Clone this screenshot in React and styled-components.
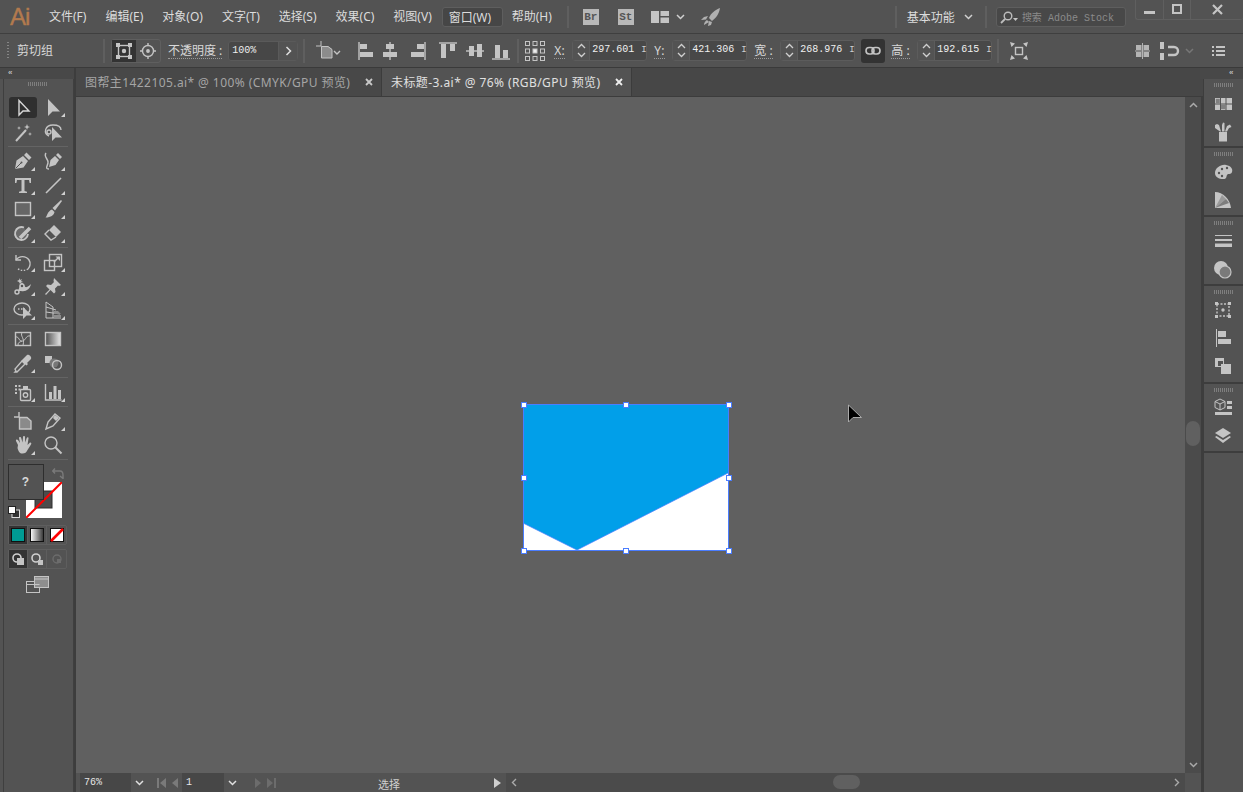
import styled, { createGlobalStyle } from 'styled-components';

const Global = createGlobalStyle`
  html, body { margin: 0; padding: 0; background: #535353; }
  * { box-sizing: border-box; }
`;

const FONT = `"Noto Sans", "Noto Sans CJK SC", "Liberation Sans", sans-serif`;
const MONO = `"Liberation Mono", "Noto Sans CJK SC", monospace`;
const INK = '#c4c4c4';

const Page = styled.div`
  width: 1243px;
  height: 792px;
  overflow: hidden;
  display: flex;
  flex-direction: column;
  background: #535353;
  color: #d6d6d6;
  font: 12px ${FONT};
`;

/* title bar */
const TitleBar = styled.div`
  height: 33px;
  flex: none;
  display: flex;
  align-items: center;
  position: relative;
`;
const Logo = styled.div`
  width: 49px;
  padding-left: 10px;
  font: 400 24px "Liberation Sans", sans-serif;
  -webkit-text-stroke: 0.4px #b27a4e;
  letter-spacing: -1px;
  color: #b27a4e;
`;
const MenuItem = styled.div`
  height: 20px;
  line-height: 19px;
  padding: 0 ${(p) => (p.$active ? 6 : 0)}px;
  margin-right: ${(p) => (p.$active ? 9 : 19)}px;
  margin-left: ${(p) => (p.$active ? -9 : 0)}px;
  ${(p) => p.$active && 'width: 61px;'}
  white-space: nowrap;
  color: #dcdcdc;
  ${(p) => p.$active && 'background: #464646; border: 1px solid #5e5e5e; border-radius: 3px;'}
`;
const VSep = styled.div`
  width: 2px;
  height: ${(p) => p.$h || 22}px;
  flex: none;
  background: #5f5f5f;
  margin-left: ${(p) => p.$ml || 0}px;
`;
const Badge = styled.div`
  width: 16px;
  height: 16px;
  margin-left: ${(p) => p.$ml}px;
  background: #b8b8b8;
  color: #555;
  font: 700 11px/16px "Liberation Mono", monospace;
  text-align: center;
`;
const Spot = styled.div`
  display: flex;
  align-items: center;
  flex: none;
  margin-left: ${(p) => p.$ml || 0}px;
`;
const Workspace = styled.div`
  margin-left: ${(p) => p.$ml}px;
  font-size: 12px;
  color: #dcdcdc;
  white-space: nowrap;
`;
const SearchBox = styled.div`
  width: 130px;
  height: 20px;
  margin-left: 9px;
  display: flex;
  align-items: center;
  gap: 4px;
  padding-left: 3px;
  background: #484848;
  border: 1px solid #5e5e5e;
  border-radius: 3px;
  color: #8b8b8b;
  font: 10px ${MONO};
  white-space: nowrap;
`;
const WindowControls = styled.div`
  position: absolute;
  right: 0;
  top: -1px;
  width: 108px;
  height: 21px;
  display: grid;
  grid-template-columns: 28px 27px 1fr;
  border: 1px solid #5f5f5f;
  border-right: 0;
  border-radius: 0 0 3px 3px;
`;
const WinButton = styled.div`
  display: flex;
  align-items: center;
  justify-content: center;
  border-right: 1px solid #5f5f5f;
  &:last-child { border-right: 0; }
`;

/* control bar */
const ControlBar = styled.div`
  height: 35px;
  flex: none;
  display: flex;
  align-items: center;
  border-top: 1px solid #3f3f3f;
  border-bottom: 1px solid #3a3a3a;
  padding-left: 7px;
`;
const Grip = styled.div`
  width: 2px;
  height: 18px;
  flex: none;
  background: repeating-linear-gradient(#858585 0 1px, transparent 1px 3px);
`;
const Label = styled.div`
  margin-left: ${(p) => p.$ml || 0}px;
  width: ${(p) => (p.$w ? `${p.$w}px` : 'auto')};
  flex: none;
  font-size: 12px;
  line-height: 15px;
  color: #d8d8d8;
  white-space: nowrap;
  ${(p) => p.$under && 'border-bottom: 1px dotted #9a9a9a;'}
`;
const ToggleGroup = styled.div`
  margin-left: ${(p) => p.$ml || 0}px;
  display: flex;
  height: 24px;
  flex: none;
  border: 1px solid #5f5f5f;
  border-radius: 3px;
`;
const ToggleCell = styled.div`
  width: 24px;
  display: flex;
  align-items: center;
  justify-content: center;
  background: ${(p) => (p.$active ? '#333' : 'transparent')};
`;
const OpacityField = styled.div`
  margin-left: 6px;
  width: 70px;
  height: 20px;
  flex: none;
  display: flex;
  border: 1px solid #5a5a5a;
  border-radius: 3px;
  background: #474747;
  font: 10px/18px ${MONO};
  color: #eee;
  padding-left: 3px;
`;
const OpacityArrow = styled.div`
  margin-left: auto;
  width: 19px;
  display: flex;
  align-items: center;
  justify-content: center;
  background: #535353;
  border-left: 1px solid #5a5a5a;
`;
const NumberBox = styled.div`
  margin-left: ${(p) => p.$ml || 0}px;
  width: ${(p) => p.$w || 75}px;
  height: 21px;
  flex: none;
  display: flex;
  border: 1px solid #5c5c5c;
  border-radius: 3px;
  background: #484848;
`;
const Spinner = styled.div`
  width: 17px;
  flex: none;
  display: flex;
  background: #535353;
  border-right: 1px solid #5c5c5c;
  align-items: center;
  justify-content: center;
`;
const NumberValue = styled.div`
  flex: 1;
  padding-left: 2px;
  font: 10px/18px ${MONO};
  color: #f0f0f0;
  white-space: nowrap;
`;
const Caret = styled.span`
  color: #cfcfcf;
  font-size: 9px;
  margin-left: 7px;
`;
const LinkButton = styled.div`
  margin-left: 6px;
  width: 24px;
  height: 24px;
  flex: none;
  display: flex;
  align-items: center;
  justify-content: center;
  background: #333;
  border-radius: 3px;
`;

/* workspace */
const Body = styled.div`
  flex: 1;
  min-height: 0;
  display: flex;
`;
const LeftDock = styled.div`
  width: 76px;
  flex: none;
  display: flex;
  flex-direction: column;
  border-right: 2px solid #3d3d3d;
  padding-left: 3px;
`;
const CollapseRow = styled.div`
  height: 11px;
  flex: none;
  background: #484848;
  margin-left: -3px;
  font: 700 8px/10px "Liberation Sans", sans-serif;
  color: #bdbdbd;
  padding-left: ${(p) => (p.$right ? 29 : 8)}px;
  letter-spacing: -1px;
`;
const ToolPanel = styled.div`
  flex: 1;
  border-left: 1px solid #3f3f3f;
  border-right: 1px solid #3f3f3f;
  display: flex;
  flex-direction: column;
  align-items: center;
  padding: 3px 2px 0 0;
`;
const DragGrip = styled.div`
  width: ${(p) => p.$w || 19}px;
  height: 4px;
  flex: none;
  margin-bottom: ${(p) => p.$mb || 0}px;
  background: repeating-linear-gradient(90deg, #7e7e7e 0 1px, transparent 1px 2px);
`;
const ToolRow = styled.div`
  width: 60px;
  height: ${(p) => p.$h || 24}px;
  flex: none;
  display: grid;
  grid-template-columns: 30px 30px;
  align-items: center;
  justify-items: center;
`;
const ToolCell = styled.div`
  position: relative;
  width: 28px;
  height: 21px;
  display: flex;
  align-items: center;
  justify-content: center;
  border-radius: 3px;
  background: ${(p) => (p.$active ? '#2f2f2f' : 'transparent')};
  &::after {
    content: '';
    display: ${(p) => (p.$menu ? 'block' : 'none')};
    position: absolute;
    right: 2px;
    bottom: 1px;
    border-style: solid;
    border-width: 0 0 4px 4px;
    border-color: transparent transparent #d0d0d0 transparent;
  }
`;
const ToolSep = styled.div`
  width: 60px;
  height: 1px;
  flex: none;
  margin: ${(p) => p.$my || 2}px 0;
  background: #646464;
`;
const ColorArea = styled.div`
  position: relative;
  width: 60px;
  height: 57px;
  flex: none;
  margin-top: 2px;
`;
const FillBox = styled.div`
  position: absolute;
  left: 0;
  top: 0;
  width: 36px;
  height: 36px;
  background: #535353;
  border: 1px solid #2e2e2e;
  text-align: center;
  font: 700 12px/34px "Liberation Sans", sans-serif;
  color: #d9d9d9;
  z-index: 1;
`;
const StrokeBox = styled.svg`
  position: absolute;
  left: 18px;
  top: 18px;
`;
const SwapIcon = styled.svg`
  position: absolute;
  left: 44px;
  top: 3px;
`;
const DefaultIcon = styled.svg`
  position: absolute;
  left: 0;
  top: 42px;
`;
const ButtonStrip = styled.div`
  width: 59px;
  height: 20px;
  flex: none;
  margin-top: ${(p) => p.$mt}px;
  display: grid;
  grid-template-columns: repeat(3, 1fr);
  border: 1px solid #5e5e5e;
  border-radius: 2px;
`;
const StripCell = styled.div`
  display: flex;
  align-items: center;
  justify-content: center;
  background: ${(p) => (p.$active ? '#333' : 'transparent')};
  border-right: 1px solid #5e5e5e;
  &:last-child { border-right: 0; }
`;
const ScreenMode = styled.div`
  margin-top: 7px;
  height: 18px;
  flex: none;
`;

const Center = styled.div`
  flex: 1;
  min-width: 0;
  display: flex;
  flex-direction: column;
`;
const TabBar = styled.div`
  height: 29px;
  flex: none;
  display: flex;
  background: #474747;
  border-bottom: 1px solid #3c3c3c;
`;
const Tab = styled.div`
  width: ${(p) => p.$w}px;
  height: 28px;
  flex: none;
  display: flex;
  align-items: center;
  padding: 0 8px 0 9px;
  font-size: 12px;
  letter-spacing: 0.42px;
  white-space: nowrap;
  color: ${(p) => (p.$active ? '#e0e0e0' : '#a5a5a5')};
  background: ${(p) => (p.$active ? '#535353' : '#484848')};
  border-right: 1px solid #3c3c3c;
`;
const TabClose = styled.svg`
  margin-left: auto;
`;
const CanvasRow = styled.div`
  flex: 1;
  min-height: 0;
  display: flex;
`;
const Canvas = styled.div`
  flex: 1;
  position: relative;
  background: #606060;
`;
const Artwork = styled.svg`
  position: absolute;
  left: 443px;
  top: 303px;
`;
const Pointer = styled.svg`
  position: absolute;
  left: 771px;
  top: 307px;
`;
const VScroll = styled.div`
  width: 18px;
  flex: none;
  position: relative;
  background: #4b4b4b;
  display: flex;
  flex-direction: column;
  align-items: center;
  justify-content: space-between;
  padding: 5px 0;
  border-right: 2px solid #3d3d3d;
`;
const VThumb = styled.div`
  position: absolute;
  left: 1px;
  top: 324px;
  width: 14px;
  height: 25px;
  border-radius: 7px;
  background: #606060;
`;
const StatusBar = styled.div`
  height: 19px;
  flex: none;
  display: flex;
  align-items: stretch;
  background: #535353;
  padding-left: 4px;
`;
const StatusField = styled.div`
  width: ${(p) => p.$w}px;
  flex: none;
  padding-left: 4px;
  background: #474747;
  font: 10px/20px ${MONO};
  color: #e6e6e6;
`;
const StatusButton = styled.div`
  width: ${(p) => p.$w || 17}px;
  flex: none;
  margin-left: ${(p) => p.$ml || 0}px;
  display: flex;
  align-items: center;
  justify-content: center;
  gap: 6px;
`;
const StatusText = styled.div`
  width: 198px;
  flex: none;
  margin-left: 8px;
  text-align: center;
  font-size: 11px;
  line-height: 23px;
  color: #cfcfcf;
`;
const HScroll = styled.div`
  flex: 1;
  position: relative;
  background: #4b4b4b;
  display: flex;
  align-items: center;
  justify-content: space-between;
  padding: 0 5px 0 5px;
`;
const HThumb = styled.div`
  position: absolute;
  left: 327px;
  top: 2px;
  width: 27px;
  height: 14px;
  border-radius: 7px;
  background: #606060;
`;
const RightEdge = styled.div`
  width: 18px;
  flex: none;
  background: #535353;
  border-right: 2px solid #3d3d3d;
`;

const RightDock = styled.div`
  width: 40px;
  flex: none;
  display: flex;
  flex-direction: column;
`;
const DockGroup = styled.div`
  height: ${(p) => p.$h}px;
  flex: none;
  display: flex;
  flex-direction: column;
  align-items: center;
  padding: 4px 1px 0 0;
  border-bottom: 2px solid #3d3d3d;
  border-left: 1px solid #3d3d3d;
`;
const DockIcon = styled.div`
  height: ${(p) => p.$h || 28}px;
  flex: none;
  margin-top: ${(p) => p.$mt || 0}px;
  display: flex;
  align-items: center;
  justify-content: center;
`;
const DockRest = styled.div`
  flex: 1;
  border-left: 1px solid #3d3d3d;
`;

/* small helpers for the drawings */
const Ic = ({ w = 20, h = 20, children, fill = 'none', stroke = INK, sw = 1.4 }) => (
  <svg width={w} height={h} viewBox={`0 0 ${w} ${h}`} fill={fill} stroke={stroke} strokeWidth={sw}>
    {children}
  </svg>
);
const Chevron = ({ up, c = '#d0d0d0', w = 9 }) => (
  <svg width={w} height="6" viewBox="0 0 9 6" fill="none" stroke={c} strokeWidth="1.5">
    <path d={up ? 'M1 5l3.500-3.500L8 5' : 'M1 1l3.500 3.500L8 1'} />
  </svg>
);
const Fill = ({ d, fill = INK }) => <path d={d} fill={fill} stroke="none" />;

const AlignIcon = ({ ml, w = 18, children }) => (
  <Spot $ml={ml}>
    <Ic w={w} h={20}>{children}</Ic>
  </Spot>
);

const NumberField = ({ ml, w, value }) => (
  <NumberBox $ml={ml} $w={w}>
    <Spinner>
      <svg width="9" height="17" viewBox="0 0 9 17" fill="none" stroke="#d0d0d0" strokeWidth="1.3">
        <path d="M1 6l3.500-3.500L8 6M1 11l3.500 3.500L8 11" />
      </svg>
    </Spinner>
    <NumberValue>
      {value}
      <Caret>I</Caret>
    </NumberValue>
  </NumberBox>
);

const TOOLS = {
  select: <path d="M6 2.500v14.500l4-4h6z" stroke="#d8d8d8" fill="none" />,
  direct: <Fill d="M5 1v17l4.500-4.500H17z" />,
  wand: (
    <>
      <path d="M3 19L13 8" strokeWidth="2" />
      <Fill d="M14 2l.8 2.200L17 5l-2.200.8L14 8l-.8-2.200L11 5l2.200-.8zM6 4l.5 1.500L8 6l-1.500.5L6 8l-.5-1.500L4 6l1.500-.5zM17 10l.5 1.500 1.500.5-1.500.5-.5 1.500-.5-1.500-1.500-.5 1.500-.5z" />
    </>
  ),
  lasso: (
    <>
      <path d="M6 14C0 11 2 3 10 3c5 0 8 2 8 5" />
      <circle cx="6" cy="10" r="2" />
      <Fill d="M9 5v14l3.500-3.500H19z" />
    </>
  ),
  pen: (
    <>
      <Fill d="M2 18l1.500-8.500L10 5l5 5-4.500 6.500zM11 4l2.500-2.500 5 5L16 9z" />
      <path d="M2.500 17.500L8 12" stroke="#535353" strokeWidth="1" />
      <circle cx="8.500" cy="11.500" r="1" fill="#535353" stroke="none" />
    </>
  ),
  curve: (
    <>
      <path d="M3 2c-3 4 3 6 2 10s-3 6 1 6" />
      <Fill d="M6 16l1.500-7L12 5l4 4-3.500 5zM13 4l2-2 4 4-2 2z" />
    </>
  ),
  type: <Fill d="M2 3h16v5h-1.400L16 5h-4.500v11l2.500.7V18H6v-1.300l2.500-.7V5H4l-.6 3H2z" />,
  line: <path d="M3 18L18 3" strokeWidth="1.600" />,
  rect: <rect x="2.500" y="3.500" width="15" height="13" fill="#666" />,
  brush: (
    <>
      <Fill d="M18 1l1 1-7 9.500-2.500-2.500z" />
      <Fill d="M9 10.500l2.500 2.500c-.5 3-3.500 5.500-9 5.500 2-1.500 1.500-6 6.500-8z" />
    </>
  ),
  shaper: (
    <>
      <path d="M11 4.500A6.500 6.500 0 1 0 15 11" strokeWidth="1.800" fill="#6a6a6a" />
      <path d="M7 15L17 5" strokeWidth="3.500" />
    </>
  ),
  eraser: (
    <>
      <Fill d="M11 2l7 7-5 5-7-7z" />
      <path d="M6 7l-4 4 6 6 5-3" />
    </>
  ),
  rotate: (
    <>
      <path d="M3 3v5h5" />
      <path d="M3 8a8 8 0 0 1 13 0c2 3 1 7-1 9" />
      <path d="M15 17c-3 2-8 2-11-1" strokeDasharray="1.500 1.500" />
    </>
  ),
  scale: (
    <>
      <rect x="1.500" y="8.500" width="10" height="10" />
      <rect x="6.500" y="2.500" width="12" height="12" />
      <path d="M11 10l5-5" />
      <Fill d="M12.500 4.500h4.500V9z" />
    </>
  ),
  warp: (
    <>
      <path d="M3 15c4 1 3-8 6-8 2 0 2 5 5 4 2-1 3-2 4-3-1 5-5 8-10 7-3 0-4 1-5 0z" fill={INK} stroke="none" />
      <circle cx="4" cy="16" r="2" fill="#535353" />
      <circle cx="9" cy="10" r="2" fill="#535353" />
      <Fill d="M6 2l1 2 2-1-1 2 2 1-2 .5L7 8 6 6 4 5l2-1z" />
    </>
  ),
  pin: <Fill d="M11 2l7 7-2 1-1-.5-3 3 .5 3.500-1.500 1.500-3.500-3.500L3 19l-1-1 4.500-4.500L3 10l1.500-1.500L8 9l3-3-.5-1z" />,
  free: (
    <>
      <ellipse cx="9" cy="9" rx="8" ry="6" />
      <path d="M5 9h7" strokeDasharray="1.500 1.500" />
      <Fill d="M10 7v12l3.500-3.500H19z" />
    </>
  ),
  grid: (
    <>
      <path d="M3 2v16h15M3 2l7 5v11M3 7l10 3M3 12l14 2" strokeWidth="1" />
      <Fill d="M11 11h4l3 3h-7zM11 15h7v2h-7z" fill="#8d8d8d" />
    </>
  ),
  mesh: (
    <>
      <rect x="2.500" y="3.500" width="15" height="13" />
      <path d="M2.500 8c4-1 3 5 7 4s3-6 8-5M9 3.500c-2 4 3 5 1 13M5 16c0-3 2-3 4-4" strokeWidth="1" />
    </>
  ),
  gradient: (
    <>
      <defs>
        <linearGradient id="tg">
          <stop offset="0" stopColor="#4c4c4c" />
          <stop offset="1" stopColor="#e6e6e6" />
        </linearGradient>
      </defs>
      <rect x="2.500" y="3.500" width="15" height="13" fill="url(#tg)" />
    </>
  ),
  dropper: (
    <>
      <path d="M3 18l-1 1 2 0 8-8-3-3-7 8z" />
      <Fill d="M10 6l4-4c2-1 5 2 4 4l-4 4 1 1-1.500 1.500L8.500 7.500z" />
    </>
  ),
  blend: (
    <>
      <Fill d="M2 3h7v7H2z" />
      <circle cx="11" cy="10" r="4.500" fill="#777" stroke="none" />
      <circle cx="14" cy="12" r="4.500" />
    </>
  ),
  spray: (
    <>
      <rect x="7.500" y="7.500" width="10" height="11" rx="1" />
      <Fill d="M10 4h5v3h-5z" />
      <circle cx="12.500" cy="13" r="2.200" />
      <Fill d="M2 3h2v2H2zM5.500 3h2v2h-2zM2 6.500h2v2H2zM5.500 6.500h2v2h-2zM2 10h2v2H2z" />
    </>
  ),
  graph: (
    <>
      <Fill d="M6 10h3v7H6zM10.500 4h3v13h-3zM15 8h3v9h-3z" />
      <path d="M2.500 2v16h16" />
    </>
  ),
  artboard: (
    <>
      <Fill d="M6 6h8l4 4v8H6z" fill="#8a8a8a" />
      <path d="M6.500 18V6.500H14l4 3.500v8zM1 6h5M6 1v5" />
    </>
  ),
  knife: (
    <>
      <path d="M3 18l2-7 7-8 5 4-7 8z" />
      <Fill d="M12 4l4 3-3 3-3-3z" />
    </>
  ),
  hand: (
    <Fill d="M5 10L3 6c-.5-1.500 1-2 2-1l2 3-1-5c0-1.500 2-1.500 2.200 0L9.500 7.500 10 2c0-1.500 2-1.500 2 0l.2 5.500 1.500-4.500c.5-1.200 2-.8 1.800.5L14.500 10l2-2c1-1 2.500 0 1.500 1.500L14.500 15c-1 2.500-2.500 3.500-5 3.500-3 0-4-2-5-5.500z" />
  ),
  zoom: (
    <>
      <circle cx="8" cy="8" r="6" />
      <path d="M12 12l6.500 6.500" strokeWidth="2" />
    </>
  ),
};

const Tool = ({ name, active, menu }) => (
  <ToolCell $active={active} $menu={menu}>
    <Ic>{TOOLS[name]}</Ic>
  </ToolCell>
);

const HANDLES = [
  [0, 0], [102, 0], [205, 0],
  [0, 73], [205, 73],
  [0, 146], [102, 146], [205, 146],
];

export default function App() {
  return (
    <Page>
      <Global />
      <TitleBar>
        <Logo>Ai</Logo>
        <MenuItem>文件(F)</MenuItem>
        <MenuItem>编辑(E)</MenuItem>
        <MenuItem>对象(O)</MenuItem>
        <MenuItem>文字(T)</MenuItem>
        <MenuItem>选择(S)</MenuItem>
        <MenuItem>效果(C)</MenuItem>
        <MenuItem>视图(V)</MenuItem>
        <MenuItem $active>窗口(W)</MenuItem>
        <MenuItem>帮助(H)</MenuItem>
        <VSep $ml={-4} />
        <Badge $ml={14}>Br</Badge>
        <Badge $ml={19}>St</Badge>
        <Spot $ml={17}>
          <Ic w={18} h={14}>
            <Fill d="M0 1h8v12H0zM9.500 1H18v5H9.500zM9.500 7.500H18V13H9.500z" />
          </Ic>
        </Spot>
        <Spot $ml={7}>
          <Chevron />
        </Spot>
        <Spot $ml={16}>
          <Ic w={20} h={18}>
            <Fill d="M19 0c-1 6-4 10-8 13l-3-3C10 5 14 2 19 0zM7 8L3 9l-3 3 5-.5zM11 14l-1 3-3 1 1-5zM6 12l2 2-5 3c0-2 1-4 3-5z" fill="#b0b0b0" />
          </Ic>
        </Spot>
        <VSep $ml={174} />
        <Workspace $ml={10}>基本功能</Workspace>
        <Spot $ml={9}>
          <Chevron />
        </Spot>
        <VSep $ml={12} />
        <SearchBox>
          <Ic w={18} h={14} stroke="#bdbdbd">
            <circle cx="8" cy="6" r="3.800" />
            <path d="M5 9l-4 4" strokeWidth="1.800" />
            <Fill d="M13 8h5l-2.500 3z" />
          </Ic>
          搜索 Adobe Stock
        </SearchBox>
        <WindowControls>
          <WinButton>
            <Ic w={11} h={11}>
              <Fill d="M0 7h11v3H0z" />
            </Ic>
          </WinButton>
          <WinButton>
            <Ic w={11} h={11} sw={2}>
              <rect x="1" y="1" width="8" height="8" />
            </Ic>
          </WinButton>
          <WinButton>
            <Ic w={11} h={11} sw={2.2}>
              <path d="M1 1l9 9M10 1l-9 9" />
            </Ic>
          </WinButton>
        </WindowControls>
      </TitleBar>

      <ControlBar>
        <Grip />
        <Label $ml={8} $w={86}>剪切组</Label>
        <VSep $h={24} />
        <ToggleGroup $ml={6}>
          <ToggleCell $active>
            <Ic w={16} h={16}>
              <rect x="2.500" y="2.500" width="11" height="11" />
              <circle cx="8" cy="8" r="1.500" fill={INK} />
              <Fill d="M0 0h4v4H0zM12 0h4v4h-4zM0 12h4v4H0zM12 12h4v4h-4z" />
            </Ic>
          </ToggleCell>
          <ToggleCell>
            <Ic w={16} h={16}>
              <circle cx="8" cy="8" r="5.500" />
              <circle cx="8" cy="8" r="1.200" fill={INK} />
              <path d="M8 0v2.500M8 13.500V16M0 8h2.500M13.500 8H16" />
            </Ic>
          </ToggleCell>
        </ToggleGroup>
        <Label $ml={7} $under>不透明度 :</Label>
        <OpacityField>
          100%
          <OpacityArrow>
            <svg width="7" height="10" viewBox="0 0 7 10" fill="none" stroke="#e0e0e0" strokeWidth="1.500">
              <path d="M1.500 1l4 4-4 4" />
            </svg>
          </OpacityArrow>
        </OpacityField>
        <VSep $ml={5} $h={24} />
        <Spot $ml={11}>
          <Ic w={25} h={20}>
            <Fill d="M5 5h7l4 3v9H5z" fill="#8c8c8c" />
            <path d="M5.500 17V5.500H12l4 3V17zM0 5h5M5 0v5" strokeWidth="1" />
            <path d="M18 10l3 3 3-3" />
          </Ic>
        </Spot>
        <AlignIcon ml={17} w={16}>
          <path d="M1 1v18" />
          <Fill d="M2 3h7v5H2zM2 11h13v5H2z" />
        </AlignIcon>
        <AlignIcon ml={8} w={16}>
          <path d="M8 1v18" />
          <Fill d="M4 3h8v5H4zM1 11h14v5H1z" />
        </AlignIcon>
        <AlignIcon ml={12} w={16}>
          <path d="M15 1v18" />
          <Fill d="M7 3h7v5H7zM1 11h13v5H1z" />
        </AlignIcon>
        <AlignIcon ml={12} w={20}>
          <path d="M1 2h18" />
          <Fill d="M3 3h5v14H3zM12 3h5v7h-5z" />
        </AlignIcon>
        <AlignIcon ml={8} w={18}>
          <path d="M0 10h18" />
          <Fill d="M3 5h5v10H3zM11 3h5v13h-5z" />
        </AlignIcon>
        <AlignIcon ml={8} w={18}>
          <path d="M0 18h18" />
          <Fill d="M3 4h5v13H3zM11 9h5v8h-5z" />
        </AlignIcon>
        <VSep $ml={7} $h={24} />
        <Spot $ml={6}>
          <Ic w={20} h={20} sw={1}>
            <rect x="0.500" y="0.500" width="4" height="4" />
            <rect x="8" y="0.500" width="4" height="4" />
            <rect x="15.500" y="0.500" width="4" height="4" />
            <rect x="0.500" y="8" width="4" height="4" />
            <rect x="8" y="8" width="4" height="4" fill="#eee" />
            <rect x="15.500" y="8" width="4" height="4" />
            <rect x="0.500" y="15.500" width="4" height="4" />
            <rect x="8" y="15.500" width="4" height="4" />
            <rect x="15.500" y="15.500" width="4" height="4" />
          </Ic>
        </Spot>
        <Label $ml={9} $w={11} $under>X:</Label>
        <NumberField ml={7} value="297.601" />
        <Label $ml={7} $w={11} $under>Y:</Label>
        <NumberField ml={7} value="421.306" />
        <Label $ml={7} $w={19} $under>宽 :</Label>
        <NumberField ml={7} value="268.976" />
        <LinkButton>
          <Ic w={16} h={10} sw={1.6}>
            <rect x="1" y="1.500" width="8" height="6.500" rx="3.200" />
            <rect x="7" y="1.500" width="8" height="6.500" rx="3.200" />
          </Ic>
        </LinkButton>
        <Label $ml={6} $w={19} $under>高 :</Label>
        <NumberField ml={7} value="192.615" />
        <VSep $ml={5} $h={24} />
        <Spot $ml={11}>
          <Ic w={18} h={18}>
            <rect x="5.500" y="5.500" width="7" height="7" />
            <Fill d="M0 0l5 1.500L1.500 5zM18 0l-5 1.500L16.500 5zM0 18l5-1.500L1.500 13zM18 18l-5-1.500 3.500-3.500z" />
          </Ic>
        </Spot>
        <Spot $ml={107}>
          <Ic w={15} h={16}>
            <Fill d="M1 2h5.500v5H1zM8.500 2H14v5H8.500zM1 9h5.500v5H1zM8.500 9H14v5H8.500zM7 0h1v16H7zM0 7.500h15v1H0z" fill="#b4b4b4" />
          </Ic>
        </Spot>
        <Spot $ml={10}>
          <Ic w={20} h={18}>
            <Fill d="M0 0h4v7H0zM0 11h4v7H0z" />
            <path d="M8 5h6a4 4 0 0 1 0 8H8" strokeWidth="2.400" />
          </Ic>
        </Spot>
        <Spot $ml={5}>
          <Chevron c="#777" />
        </Spot>
        <Spot $ml={18}>
          <Ic w={13} h={12}>
            <Fill d="M0 1h2v2H0zM4 1h9v2H4zM0 5h2v2H0zM4 5h9v2H4zM0 9h2v2H0zM4 9h9v2H4z" />
          </Ic>
        </Spot>
      </ControlBar>

      <Body>
        <LeftDock>
          <CollapseRow>‹‹</CollapseRow>
          <ToolPanel>
            <DragGrip $mb={9} />
            <ToolRow $h={25}>
              <Tool name="select" active />
              <Tool name="direct" menu />
            </ToolRow>
            <ToolRow>
              <Tool name="wand" />
              <Tool name="lasso" />
            </ToolRow>
            <ToolSep />
            <ToolRow>
              <Tool name="pen" menu />
              <Tool name="curve" menu />
            </ToolRow>
            <ToolRow>
              <Tool name="type" menu />
              <Tool name="line" menu />
            </ToolRow>
            <ToolRow>
              <Tool name="rect" menu />
              <Tool name="brush" menu />
            </ToolRow>
            <ToolRow>
              <Tool name="shaper" menu />
              <Tool name="eraser" menu />
            </ToolRow>
            <ToolSep />
            <ToolRow>
              <Tool name="rotate" menu />
              <Tool name="scale" menu />
            </ToolRow>
            <ToolRow>
              <Tool name="warp" menu />
              <Tool name="pin" menu />
            </ToolRow>
            <ToolRow>
              <Tool name="free" menu />
              <Tool name="grid" menu />
            </ToolRow>
            <ToolSep />
            <ToolRow>
              <Tool name="mesh" />
              <Tool name="gradient" />
            </ToolRow>
            <ToolRow>
              <Tool name="dropper" menu />
              <Tool name="blend" />
            </ToolRow>
            <ToolSep />
            <ToolRow>
              <Tool name="spray" menu />
              <Tool name="graph" menu />
            </ToolRow>
            <ToolSep />
            <ToolRow>
              <Tool name="artboard" />
              <Tool name="knife" menu />
            </ToolRow>
            <ToolRow>
              <Tool name="hand" menu />
              <Tool name="zoom" />
            </ToolRow>
            <ToolSep />
            <ColorArea>
              <FillBox>?</FillBox>
              <StrokeBox width="36" height="36" viewBox="0 0 36 36">
                <rect width="36" height="36" fill="#fff" />
                <rect x="9" y="9" width="17" height="17" fill="#4c4c4c" stroke="#2e2e2e" />
                <path d="M0 36L36 0" stroke="#f00" strokeWidth="2" />
              </StrokeBox>
              <SwapIcon width="12" height="12" viewBox="0 0 12 12" fill="none" stroke="#7a7a7a" strokeWidth="1.400">
                <path d="M1 4h7c2 0 3 1 3 4M3 1.500L.8 4 3 6.500M8 9l3 2.500L11 8" />
              </SwapIcon>
              <DefaultIcon width="12" height="12" viewBox="0 0 12 12">
                <rect x="4" y="4" width="7.500" height="7.500" fill="#333" stroke="#ddd" />
                <rect x="0.500" y="0.500" width="7" height="7" fill="#fff" stroke="#222" />
              </DefaultIcon>
            </ColorArea>
            <ButtonStrip $mt={4}>
              <StripCell $active>
                <svg width="14" height="14" viewBox="0 0 14 14">
                  <rect x="0.500" y="0.500" width="13" height="13" fill="#009b93" stroke="#111" />
                </svg>
              </StripCell>
              <StripCell>
                <svg width="14" height="14" viewBox="0 0 14 14">
                  <defs>
                    <linearGradient id="sg">
                      <stop offset="0" stopColor="#fff" />
                      <stop offset="1" stopColor="#333" />
                    </linearGradient>
                  </defs>
                  <rect x="0.500" y="0.500" width="13" height="13" fill="url(#sg)" stroke="#111" />
                </svg>
              </StripCell>
              <StripCell>
                <svg width="14" height="14" viewBox="0 0 14 14">
                  <rect x="0.500" y="0.500" width="13" height="13" fill="#fff" stroke="#111" />
                  <path d="M1 13L13 1" stroke="#f00" strokeWidth="2.600" />
                </svg>
              </StripCell>
            </ButtonStrip>
            <ButtonStrip $mt={4}>
              <StripCell $active>
                <Ic w={14} h={14} sw={1.6} stroke="#d0d0d0">
                  <circle cx="6" cy="6" r="4" />
                  <Fill d="M6 6h7v7H6z" />
                </Ic>
              </StripCell>
              <StripCell>
                <Ic w={14} h={14} sw={1.6} stroke="#d0d0d0">
                  <circle cx="6" cy="6" r="4" />
                  <Fill d="M8 8h5v5H8z" />
                </Ic>
              </StripCell>
              <StripCell>
                <Ic w={14} h={14} sw={1.4} stroke="#6c6c6c">
                  <circle cx="7" cy="7" r="4" />
                  <Fill d="M7 7h4v4H7z" fill="#6c6c6c" />
                </Ic>
              </StripCell>
            </ButtonStrip>
            <ScreenMode>
              <Ic w={23} h={17} sw={1}>
                <rect x="0.500" y="5.500" width="13" height="11" fill="#535353" />
                <rect x="8.500" y="0.500" width="14" height="11" fill="#8e8e8e" />
                <path d="M0.500 8.500h13M8.500 3h14" />
              </Ic>
            </ScreenMode>
          </ToolPanel>
        </LeftDock>

        <Center>
          <TabBar>
            <Tab $w={306}>
              图帮主1422105.ai* @ 100% (CMYK/GPU 预览)
              <TabClose width="8" height="8" viewBox="0 0 8 8" stroke="#c8c8c8" strokeWidth="1.800">
                <path d="M1 1l6 6M7 1L1 7" />
              </TabClose>
            </Tab>
            <Tab $w={250} $active>
              未标题-3.ai* @ 76% (RGB/GPU 预览)
              <TabClose width="8" height="8" viewBox="0 0 8 8" stroke="#eee" strokeWidth="1.800">
                <path d="M1 1l6 6M7 1L1 7" />
              </TabClose>
            </Tab>
          </TabBar>
          <CanvasRow>
            <Canvas>
              <Artwork width="215" height="156" viewBox="-4 -4 215 156">
                <rect x="0" y="0" width="205" height="146" fill="#fff" />
                <path d="M0 0H205V69L54 146L0 119z" fill="#019fe9" />
                <path d="M0 119L54 146L205 69" fill="none" stroke="#4a7dff" strokeWidth="0.700" />
                <rect x="0.500" y="0.500" width="205" height="146" fill="none" stroke="#4a7dff" />
                {HANDLES.map(([x, y]) => (
                  <rect key={`${x}-${y}`} x={x - 1.5} y={y - 1.5} width="5" height="5" fill="#fff" stroke="#4a7dff" />
                ))}
              </Artwork>
              <Pointer width="16" height="20" viewBox="0 0 16 20">
                <path d="M1.500 1v17l4.500-4.500h8.500z" fill="#000" stroke="#aaa" />
              </Pointer>
            </Canvas>
            <VScroll>
              <Chevron up c="#aaa" />
              <VThumb />
              <Chevron c="#aaa" />
            </VScroll>
          </CanvasRow>
          <StatusBar>
            <StatusField $w={51}>76%</StatusField>
            <StatusButton>
              <Chevron c="#e0e0e0" />
            </StatusButton>
            <StatusButton $w={30} $ml={4}>
              <Ic w={9} h={10}><Fill d="M0 0h2v10H0zM9 0v10L3 5z" fill="#7a7a7a" /></Ic>
              <Ic w={6} h={10}><Fill d="M6 0v10L0 5z" fill="#7a7a7a" /></Ic>
            </StatusButton>
            <StatusField $w={42}>1</StatusField>
            <StatusButton>
              <Chevron c="#e0e0e0" />
            </StatusButton>
            <StatusButton $w={34} $ml={7}>
              <Ic w={6} h={10}><Fill d="M0 0v10l6-5z" fill="#6c6c6c" /></Ic>
              <Ic w={9} h={10}><Fill d="M0 0v10l6-5zM7 0h2v10H7z" fill="#6c6c6c" /></Ic>
            </StatusButton>
            <StatusText>选择</StatusText>
            <StatusButton $w={18}>
              <Ic w={7} h={10}><Fill d="M0 0v10l7-5z" fill="#d0d0d0" /></Ic>
            </StatusButton>
            <HScroll>
              <svg width="6" height="9" viewBox="0 0 6 9" fill="none" stroke="#aaa" strokeWidth="1.400"><path d="M5 1L1.500 4.500 5 8" /></svg>
              <HThumb />
              <svg width="6" height="9" viewBox="0 0 6 9" fill="none" stroke="#aaa" strokeWidth="1.400"><path d="M1 1l3.500 3.500L1 8" /></svg>
            </HScroll>
            <RightEdge />
          </StatusBar>
        </Center>

        <RightDock>
          <CollapseRow $right>‹‹</CollapseRow>
          <DockGroup $h={69}>
            <DragGrip />
            <DockIcon $mt={3}>
              <Ic w={17} h={12}>
                <Fill d="M0 0h17v12H0z" fill="#c4c4c4" />
                <path d="M0 6h17M5.500 0v12M11 0v12" stroke="#535353" strokeWidth="1" />
                <Fill d="M0.800 0.800h4v4.500h-4z" fill="#808080" />
                <Fill d="M6 6.500h5v4.700H6z" fill="#808080" />
              </Ic>
            </DockIcon>
            <DockIcon>
              <Ic w={18} h={20}>
                <Fill d="M5 10h8v9.500H5z" />
                <Fill d="M6 9.500L1 6V3l2-1 2 1 2 6.500zM8 9.500V3l1-2.500 1.500.5L10.500 9.500zM11 9.500L13 4l3-1.500L17.500 5 15 6l-2 3.500z" />
              </Ic>
            </DockIcon>
          </DockGroup>
          <DockGroup $h={69}>
            <DragGrip />
            <DockIcon $mt={1}>
              <svg width="19" height="15" viewBox="0 0 19 15">
                <path d="M1 9c0-5 6-9 11-8s7 4 6 7-4 1-5 3 0 4-4 4-8-2-8-6z" fill={INK} />
                <circle cx="5" cy="9" r="1.200" fill="#535353" />
                <circle cx="8" cy="12" r="1.200" fill="#535353" />
                <circle cx="8" cy="5" r="1.200" fill="#535353" />
                <circle cx="13" cy="4" r="1.200" fill="#535353" />
              </svg>
            </DockIcon>
            <DockIcon $h={29}>
              <svg width="16" height="16" viewBox="0 0 16 16">
                <path d="M0 0c8 0 15 7 16 16H0z" fill="#c4c4c4" />
                <path d="M0 16L7 3l4 4z" fill="#9a9a9a" />
                <path d="M0 16l11-9 3 4z" fill="#7d7d7d" />
              </svg>
            </DockIcon>
          </DockGroup>
          <DockGroup $h={69}>
            <DragGrip />
            <DockIcon $mt={2}>
              <Ic w={17} h={12}>
                <Fill d="M0 0h17v1H0zM0 4h17v2H0zM0 8.500h17V12H0z" />
              </Ic>
            </DockIcon>
            <DockIcon $h={29}>
              <svg width="18" height="18" viewBox="0 0 18 18">
                <circle cx="7" cy="7" r="7" fill={INK} />
                <circle cx="11" cy="11" r="6" fill="#7a7a7a" stroke={INK} strokeWidth="1.200" />
              </svg>
            </DockIcon>
          </DockGroup>
          <DockGroup $h={98}>
            <DragGrip />
            <DockIcon $mt={2}>
              <Ic w={16} h={16} sw={1.4}>
                <rect x="2" y="2" width="12" height="12" strokeDasharray="2 1.500" />
                <circle cx="8" cy="8" r="1" fill={INK} />
                <Fill d="M0 0h3v3H0zM13 0h3v3h-3zM0 13h3v3H0zM13 13h3v3h-3z" />
              </Ic>
            </DockIcon>
            <DockIcon>
              <Ic w={15} h={18} sw={1}>
                <path d="M0.500 0v18" />
                <Fill d="M2 2h8v6H2zM2 10h13v5H2z" />
              </Ic>
            </DockIcon>
            <DockIcon>
              <Ic w={16} h={16} sw={1}>
                <Fill d="M0 0h9v9H0z" />
                <Fill d="M3 3h5v5H3z" fill="#535353" />
                <Fill d="M6 6h10v10H6z" />
              </Ic>
            </DockIcon>
          </DockGroup>
          <DockGroup $h={69}>
            <DragGrip />
            <DockIcon $mt={1}>
              <Ic w={18} h={18} sw={1}>
                <path d="M6 1l5 2.500v6L6 12 1 9.500v-6zM1 3.500L6 6l5-2.500M6 6v6" />
                <Fill d="M13 3h5v3h-5zM13 8h5v3h-5zM1 14h17v3H1z" />
              </Ic>
            </DockIcon>
            <DockIcon $h={29}>
              <svg width="18" height="18" viewBox="0 0 18 18" fill={INK}>
                <path d="M9 1l8 5-8 5-8-5z" />
                <path d="M2.500 9L1 10l8 6 8-6-1.500-1L9 13z" />
              </svg>
            </DockIcon>
          </DockGroup>
          <DockRest />
        </RightDock>
      </Body>
    </Page>
  );
}
